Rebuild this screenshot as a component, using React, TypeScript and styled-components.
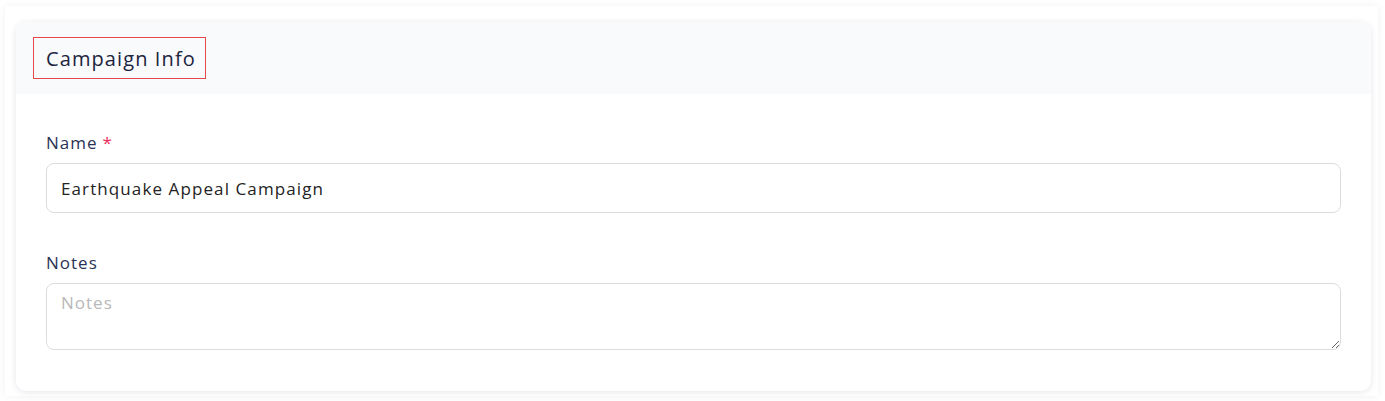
import React from "react";
import styled, { createGlobalStyle } from "styled-components";

const Global = createGlobalStyle`
  html, body { margin: 0; padding: 0; background: #ffffff; }
  body { font-family: "Open Sans", "Noto Sans", sans-serif; }
  * { box-sizing: border-box; }
`;

const Page = styled.div`
  padding: 6px 7px 6px 5px;
`;

const Shell = styled.div`
  background: #ffffff;
  box-shadow: 0 0 8px rgba(30, 40, 80, 0.06);
  padding: 16px 7px 5px 11px;
`;

const Card = styled.section`
  background: #ffffff;
  border-radius: 10px;
  box-shadow: 0 1px 6px rgba(40, 50, 110, 0.12);
  overflow: hidden;
`;

const Header = styled.header`
  background: #f9fafc;
  height: 72px;
  display: flex;
  align-items: center;
  padding: 0 17px;
`;

const Title = styled.h2`
  margin: 0;
  height: 42px;
  display: flex;
  align-items: center;
  padding: 0 9px 0 12px;
  border: 1px solid #e5484d;
  font-size: 20px;
  font-weight: 400;
  letter-spacing: 1.1px;
  color: #1c2440;
`;

const Body = styled.div`
  padding: 38px 30px 41px 30px;
  display: flex;
  flex-direction: column;
  gap: 39px;
`;

const Field = styled.div`
  display: flex;
  flex-direction: column;
  gap: 9px;
`;

const Label = styled.label`
  font-size: 17px;
  letter-spacing: 1px;
  color: #2a3356;
  line-height: 22px;
  display: flex;
  gap: 5px;
`;

const Req = styled.span`
  color: #ee2a5a;
`;

const Input = styled.input`
  height: 50px;
  border: 1px solid #dcdcdc;
  border-radius: 8px;
  padding: 0 14px;
  font-family: inherit;
  font-size: 17px;
  letter-spacing: 1.1px;
  color: #232323;
  outline: none;
`;

const TextArea = styled.textarea`
  height: 67px;
  border: 1px solid #dcdcdc;
  border-radius: 8px;
  padding: 7px 14px;
  font-family: inherit;
  font-size: 17px;
  letter-spacing: 1px;
  color: #232323;
  outline: none;
  resize: vertical;
  &::placeholder { color: #b8b8b8; }
`;

export default function App() {
  return (
    <>
      <Global />
      <Page>
        <Shell>
          <Card>
            <Header>
              <Title>Campaign Info</Title>
            </Header>
            <Body>
              <Field>
                <Label>
                  Name <Req>*</Req>
                </Label>
                <Input defaultValue="Earthquake Appeal Campaign" />
              </Field>
              <Field>
                <Label>Notes</Label>
                <TextArea placeholder="Notes" />
              </Field>
            </Body>
          </Card>
        </Shell>
      </Page>
    </>
  );
}
